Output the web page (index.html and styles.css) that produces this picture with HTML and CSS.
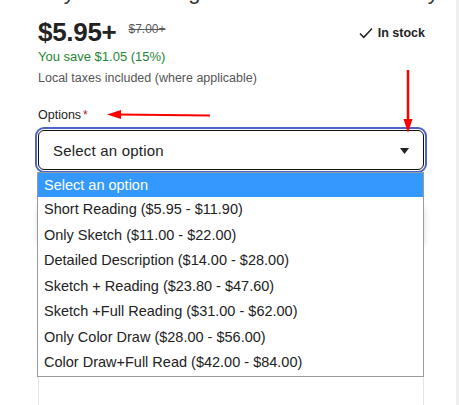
FILE: index.html
```html
<!DOCTYPE html>
<html>
<head>
<meta charset="utf-8">
<link rel="stylesheet" href="styles.css">
</head>
<body>
<div class="shell">
  <main class="page">
    <h1 class="title">Psychic Drawing of Your Soulmate Today</h1>
    <div class="price-row">
      <div class="prices">
        <span class="price">$5.95+</span>
        <span class="old">$7.00+</span>
      </div>
      <div class="stock">
        <svg class="check" width="14" height="12" viewBox="0 0 14 12"><path d="M1 6.5 L4.8 10.3 L13 1.5" fill="none" stroke="#222" stroke-width="1.5"/></svg>
        <span>In stock</span>
      </div>
    </div>
    <div class="save">You save $1.05 (15%)</div>
    <div class="taxes">Local taxes included (where applicable)</div>
    <label class="label">Options<span class="req">*</span></label>
    <div class="select-wrap">
      <div class="select">
        <span>Select an option</span>
        <svg class="caret" width="9" height="6" viewBox="0 0 9 6"><path d="M0 0 H9 L4.5 6 Z" fill="#222"/></svg>
      </div>
      <ul class="menu">
        <li class="active">Select an option</li>
        <li>Short Reading ($5.95 - $11.90)</li>
        <li>Only Sketch ($11.00 - $22.00)</li>
        <li>Detailed Description ($14.00 - $28.00)</li>
        <li>Sketch + Reading ($23.80 - $47.60)</li>
        <li>Sketch +Full Reading ($31.00 - $62.00)</li>
        <li>Only Color Draw ($28.00 - $56.00)</li>
        <li>Color Draw+Full Read ($42.00 - $84.00)</li>
      </ul>
    </div>
    <div class="card"></div>
    <textarea class="notes"></textarea>
  </main>
  <div class="scrollbar"></div>
  <svg class="arrows" width="459" height="405" viewBox="0 0 459 405">
    <line x1="210" y1="115.5" x2="118" y2="114.5" stroke="#f00" stroke-width="2"/>
    <path d="M107 114.5 L121 110 L121 119 Z" fill="#f00"/>
    <line x1="408" y1="70" x2="408" y2="122" stroke="#f00" stroke-width="2.5"/>
    <path d="M408 133 L403.5 119 L412.5 119 Z" fill="#f00"/>
  </svg>
</div>
</body>
</html>
```
FILE: styles.css
```css
html, body {
  margin: 0;
  padding: 0;
  background: #fff;
}
body {
  font-family: "Liberation Sans", Arial, sans-serif;
  color: #222;
  overflow: hidden;
}
.shell {
  position: relative;
  display: flex;
  width: 459px;
  height: 405px;
  overflow: hidden;
}
.page {
  width: 386px;
  padding-left: 38px;
  flex: none;
}
.scrollbar {
  margin-left: auto;
  width: 3px;
  background: #efefef;
}
.title {
  margin: -22px 0 0;
  font-size: 22px;
  line-height: 27px;
  font-weight: 300;
  color: #333;
  white-space: nowrap;
}
.price-row {
  display: flex;
  justify-content: space-between;
  align-items: center;
  margin-top: 12px;
}
.prices {
  display: flex;
  align-items: baseline;
  gap: 12px;
}
.price {
  font-size: 26px;
  font-weight: 700;
  line-height: 30px;
  color: #222;
  letter-spacing: -0.3px;
}
.old {
  font-size: 12px;
  color: #595959;
  text-decoration: line-through;
  position: relative;
  top: -8px;
}
.stock {
  display: flex;
  align-items: center;
  gap: 5px;
  font-size: 12.5px;
  font-weight: 700;
  color: #222;
  margin-right: -1px;
  margin-top: 2px;
}
.check { display: block; }
.save {
  margin-top: 1px;
  font-size: 13px;
  line-height: 18px;
  color: #258635;
}
.taxes {
  margin-top: 4px;
  font-size: 12.5px;
  line-height: 16px;
  color: #555;
}
.label {
  display: block;
  margin-top: 21px;
  font-size: 12.5px;
  line-height: 16px;
  color: #222;
}
.req {
  color: #a61a2e;
  margin-left: 2px;
  font-size: 12px;
}
.select-wrap {
  position: relative;
  margin-top: 7px;
}
.select {
  box-sizing: border-box;
  height: 40px;
  border: 1.5px solid #111;
  border-radius: 6px;
  outline: 2px solid #4d63c6;
  outline-offset: 1px;
  display: flex;
  align-items: center;
  justify-content: space-between;
  padding: 0 14px 0 14px;
  font-size: 15px;
  color: #222;
  letter-spacing: 0.2px;
}
.caret { display: block; margin-top: 1px; }
.menu {
  position: absolute;
  left: -1px;
  top: 42px;
  width: 387px;
  box-sizing: border-box;
  margin: 0;
  padding: 0;
  list-style: none;
  background: #fff;
  border: 1px solid #9a9a9a;
  z-index: 2;
}
.menu li {
  height: 25.5px;
  line-height: 25.5px;
  padding-left: 6px;
  font-size: 14.5px;
  color: #222;
  white-space: nowrap;
}
.menu li.active {
  background: #3399ff;
  color: #fff;
  height: 24px;
  line-height: 24px;
}
.card {
  margin-top: 35px;
  height: 40px;
  box-shadow: 0 1px 6px rgba(0,0,0,0.15);
  border-radius: 6px;
}
.notes {
  display: block;
  box-sizing: border-box;
  margin-top: 10px;
  width: 386px;
  height: 180px;
  border: 1px solid #e6e6e6;
  border-radius: 4px;
  resize: vertical;
}
.arrows {
  position: absolute;
  left: 0;
  top: 0;
  pointer-events: none;
  z-index: 5;
}
```
